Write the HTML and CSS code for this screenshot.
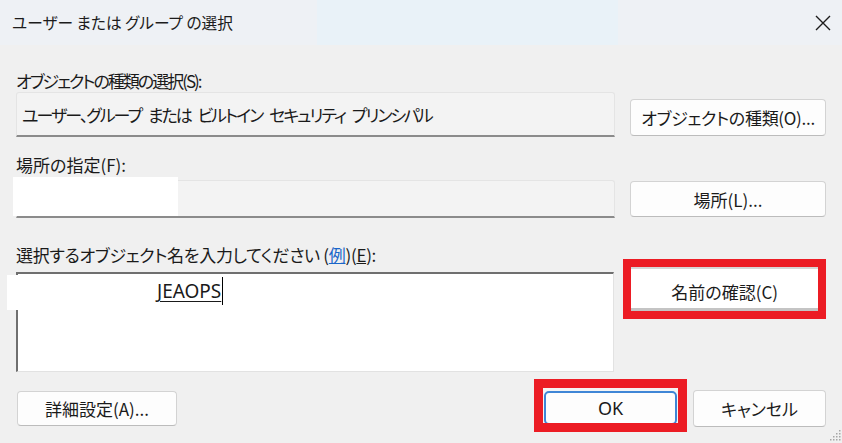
FILE: index.html
```html
<!DOCTYPE html>
<html lang="ja">
<head>
<meta charset="utf-8">
<title>ユーザー または グループ の選択</title>
<link rel="stylesheet" href="styles.css">
</head>
<body>
<div class="window">
  <div class="titlebar">
    <span class="title">ユーザー または グループ の選択</span>
    <svg class="close" width="16" height="16" viewBox="0 0 16 16"><path d="M1 1L15 15M15 1L1 15" stroke="#1c1c1c" stroke-width="1.4" fill="none"/></svg>
  </div>
  <div class="body">
    <div class="label l1">オブジェクトの種類の選択(S):</div>
    <div class="row r1">
      <div class="field f1">ユーザー、グループ または ビルトイン セキュリティ プリンシパル</div>
      <div class="btn b-type">オブジェクトの種類(O)...</div>
    </div>
    <div class="label l2">場所の指定(F):</div>
    <div class="row r2">
      <div class="field f2"><span class="redact"></span></div>
      <div class="btn b-loc">場所(L)...</div>
    </div>
    <div class="row r3">
      <div class="col-left">
        <div class="label l3">選択するオブジェクト名を入力してください (<span class="link">例</span>)(<u>E</u>):</div>
        <div class="textarea"><span class="redact2"></span><span class="entry">JEAOPS</span><span class="caret"></span></div>
      </div>
      <div class="mark mark-check"><div class="check">名前の確認(C)</div></div>
    </div>
    <div class="row r4">
      <div class="btn b-adv">詳細設定(A)...</div>
      <div class="mark mark-ok"><div class="ok">OK</div></div>
      <div class="btn b-cancel">キャンセル</div>
    </div>
  </div>
  <svg class="grip" width="12" height="16" viewBox="0 0 12 16">
    <g fill="#a6a6a6">
      <rect x="9" y="3" width="1.5" height="1.5"/>
      <rect x="6" y="6" width="1.5" height="1.5"/>
      <rect x="9" y="6" width="1.5" height="1.5"/>
      <rect x="3" y="9" width="1.5" height="1.5"/>
      <rect x="6" y="9" width="1.5" height="1.5"/>
      <rect x="9" y="9" width="1.5" height="1.5"/>
      <rect x="0" y="12" width="1.5" height="1.5"/>
      <rect x="3" y="12" width="1.5" height="1.5"/>
      <rect x="6" y="12" width="1.5" height="1.5"/>
      <rect x="9" y="12" width="1.5" height="1.5"/>
    </g>
  </svg>
</div>
</body>
</html>
```

FILE: styles.css
```css
html, body {
  margin: 0;
  padding: 0;
}
body {
  width: 842px;
  height: 443px;
  overflow: hidden;
  background: #f0f0f0;
  font-family: "Noto Sans CJK JP", "Noto Sans", sans-serif;
  font-feature-settings: "palt";
  color: #1a1a1a;
}
.window {
  position: relative;
  width: 842px;
  height: 443px;
}
.titlebar {
  height: 45px;
  box-sizing: border-box;
  display: flex;
  align-items: center;
  justify-content: space-between;
  padding: 0 11px 0 12px;
  background: linear-gradient(to right, #eef1f5 317px, #e9f2f8 317px, #e9f2f8 618px, #eef1f5 618px);
}
.title {
  font-size: 15.7px;
  color: #1c1c1c;
}
.close {
  display: block;
}
.body {
  padding: 0 16px;
}
.label {
  font-size: 17px;
  line-height: 23px;
  height: 23px;
  white-space: nowrap;
}
.l1 { margin-top: 24px; letter-spacing: -2px; }
.l2 { margin-top: 16px; }
.l3 { letter-spacing: -0.3px; }
.row {
  display: flex;
  gap: 15px;
}
.r1 { align-items: flex-end; }
.r2 { margin-top: 4px; align-items: center; }
.r3 { margin-top: 25px; align-items: flex-start; }
.r4 { margin-top: 7px; gap: 0; align-items: flex-start; }

.field {
  width: 599px;
  box-sizing: border-box;
  background: #f3f3f3;
  border: 1px solid #e4e4e4;
  border-bottom: 2px solid #8b8b8b;
  border-radius: 3px 3px 0 0;
  font-size: 17px;
  padding-left: 5px;
  display: flex;
  align-items: center;
  white-space: nowrap;
}
.f1 { height: 45px; letter-spacing: -2px; word-spacing: 5px; }
.f2 { height: 38px; position: relative; }
.redact {
  position: absolute;
  left: -4px;
  top: -4px;
  width: 165px;
  height: 39px;
  background: #ffffff;
}

.btn {
  box-sizing: border-box;
  background: #fdfdfd;
  border: 1px solid #d3d3d3;
  border-bottom-color: #bcbcbc;
  border-radius: 4px;
  display: flex;
  align-items: center;
  justify-content: center;
  font-size: 17px;
  color: #1a1a1a;
  white-space: nowrap;
}
.b-type { width: 196px; height: 37px; margin-bottom: 1px; letter-spacing: -0.3px; }
.b-loc { width: 196px; height: 36px; }

.col-left { width: 599px; }
.link { color: #1a66c9; text-decoration: underline; }
.textarea {
  position: relative;
  margin-top: 6px;
  height: 100px;
  box-sizing: border-box;
  background: #ffffff;
  border-top: 2px solid #6f6f6f;
  border-left: 2px solid #6f6f6f;
  border-right: 1px solid #e2e2e2;
  border-bottom: 1px solid #e2e2e2;
  padding: 3px 0 0 139px;
  display: flex;
  align-items: flex-start;
}
.redact2 {
  position: absolute;
  left: -11px;
  top: 1px;
  width: 143px;
  height: 35px;
  background: #ffffff;
}
.entry {
  font-family: "Noto Sans", sans-serif;
  font-size: 19px;
  line-height: 29px;
  text-decoration: underline;
  text-underline-offset: 3px;
  color: #1a1a1a;
}
.caret {
  display: inline-block;
  width: 1px;
  height: 28px;
  background: #000;
  margin-left: 1px;
}

.mark {
  box-sizing: border-box;
  border: 8px solid #ec1c24;
  overflow: hidden;
}
.mark-check {
  margin-top: 16px;
  margin-left: -6px;
  width: 203px;
  height: 60px;
}
.check {
  box-sizing: border-box;
  height: 44px;
  background: #ffffff;
  border-top: 2px solid #d6d6d6;
  border-bottom: 3px solid #c4c4c4;
  padding-top: 5px;
  display: flex;
  align-items: center;
  justify-content: center;
  font-size: 17px;
  white-space: nowrap;
}

.b-adv {
  width: 160px;
  height: 35px;
  margin-top: 12px;
  margin-left: 1px;
}
.mark-ok {
  margin-left: auto;
  width: 153px;
  height: 53px;
  border-width: 9px;
  padding: 3px 1px 0 1px;
  background: #f4f4f4;
}
.ok {
  box-sizing: border-box;
  height: 34px;
  background: #fdfdfd;
  border: 2px solid #3f86d6;
  border-radius: 5px;
  display: flex;
  align-items: center;
  justify-content: center;
  font-family: "Noto Sans", sans-serif;
  font-size: 18px;
}
.b-cancel {
  width: 133px;
  height: 37px;
  margin-top: 11px;
  margin-left: 6px;
}
.grip {
  position: absolute;
  right: 0;
  bottom: 0;
}
```
